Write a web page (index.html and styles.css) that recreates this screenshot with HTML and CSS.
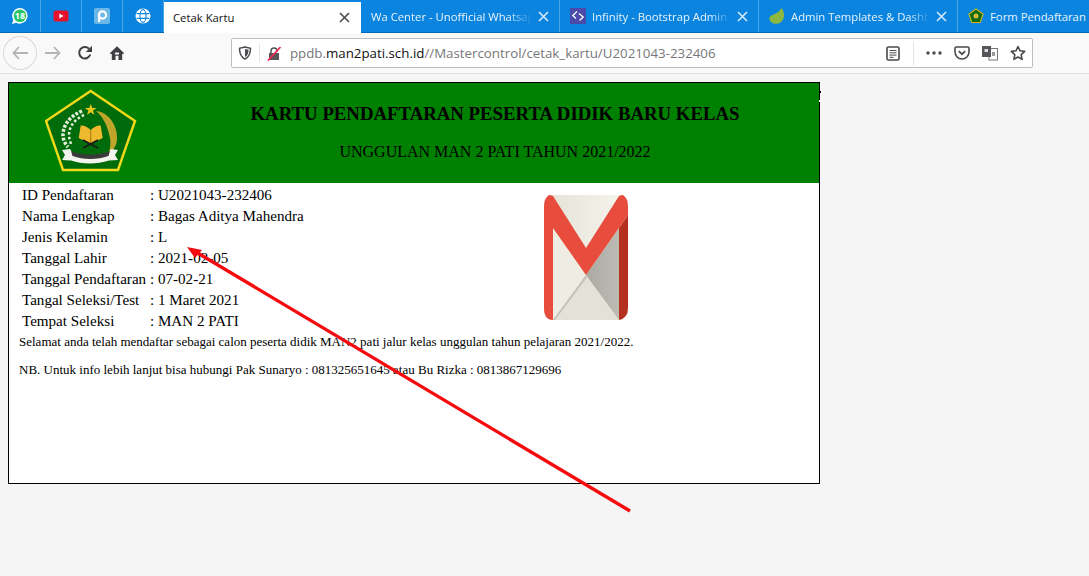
FILE: index.html
```html
<!DOCTYPE html>
<html lang="id">
<head>
    <meta charset="UTF-8">
    <title>Cetak Kartu</title>
    <link rel="stylesheet" href="styles.css">
</head>
<body>
    <!-- tab bar -->
    <div class="tabbar">
        <div class="tab pinned">
            <svg width="18" height="18" viewBox="0 0 18 18"><path d="M9 1a7.800 7.800 0 0 0-6.700 11.800L1 17l4.300-1.200A7.800 7.800 0 1 0 9 1z" fill="#fff"/><circle cx="9" cy="8.800" r="6.300" fill="#25c464"/><text x="9" y="11.800" class="wa-count">18</text></svg>
        </div>
        <div class="tab pinned">
            <svg width="16" height="12" viewBox="0 0 16 12"><rect width="15" height="11" x=".5" y=".5" rx="2.500" fill="#e8112b"/><path d="M6.300 3.400l4.200 2.600-4.200 2.600z" fill="#fff"/></svg>
        </div>
        <div class="tab pinned">
            <svg width="16" height="16" viewBox="0 0 16 16"><rect width="16" height="16" rx="2" fill="#6bb8e8"/><circle cx="8.500" cy="7" r="3.600" fill="none" stroke="#fff" stroke-width="2.200"/><rect x="4" y="5" width="2.200" height="9" fill="#fff"/></svg>
        </div>
        <div class="tab pinned">
            <svg width="16" height="16" viewBox="0 0 16 16" fill="none"><circle cx="8" cy="8" r="7.500" fill="#fff"/><g stroke="#0a84df" stroke-width="1.100"><ellipse cx="8" cy="8" rx="3" ry="6.400"/><path d="M1.600 5.600h12.800M1.600 10.400h12.800"/></g></svg>
        </div>
        <div class="tab active">
            <span class="tab-title">Cetak Kartu</span>
            <svg class="close" width="11" height="11" viewBox="0 0 11 11"><path d="M1 1l9 9M10 1l-9 9" stroke="#4a4a4f" stroke-width="1.600"/></svg>
        </div>
        <div class="tab">
            <span class="tab-title">Wa Center - Unofficial Whatsapp Api</span>
            <svg class="close" width="11" height="11" viewBox="0 0 11 11"><path d="M1 1l9 9M10 1l-9 9" stroke="#d5e9f8" stroke-width="1.600"/></svg>
        </div>
        <div class="tab">
            <svg width="16" height="16" viewBox="0 0 16 16"><rect width="16" height="16" fill="#4a4aa8"/><path d="M7 3.500L2.800 7.500 6 10.500M9 5.500l4.200 3.500L9.500 12.500" fill="none" stroke="#fff" stroke-width="1.300"/></svg>
            <span class="tab-title">Infinity - Bootstrap Admin Template</span>
            <svg class="close" width="11" height="11" viewBox="0 0 11 11"><path d="M1 1l9 9M10 1l-9 9" stroke="#d5e9f8" stroke-width="1.600"/></svg>
        </div>
        <div class="tab">
            <svg width="16" height="16" viewBox="0 0 16 16"><path d="M12.500 0C16 4 16 11 11.500 14.500 7.500 17 1 15.500.3 11 0 6 9 7 12.500 0z" fill="#8cb83f"/></svg>
            <span class="tab-title">Admin Templates &amp; Dashboard</span>
            <svg class="close" width="11" height="11" viewBox="0 0 11 11"><path d="M1 1l9 9M10 1l-9 9" stroke="#d5e9f8" stroke-width="1.600"/></svg>
        </div>
        <div class="tab last">
            <svg width="16" height="16" viewBox="0 0 16 16"><path d="M8 1l7 5-2.700 8.500H3.700L1 6z" fill="#0a6b12" stroke="#c9b420" stroke-width="1.200"/><circle cx="8" cy="8" r="2.500" fill="#d8b93a"/></svg>
            <span class="tab-title">Form Pendaftaran</span>
        </div>
    </div>

    <!-- toolbar -->
    <div class="toolbar">
        <div class="back-btn">
            <svg width="16" height="14" viewBox="0 0 16 14"><path d="M7 1L1.500 7 7 13M2 7h14" fill="none" stroke="#b4b4b6" stroke-width="1.800"/></svg>
        </div>
        <svg class="forward" width="16" height="14" viewBox="0 0 16 14"><path d="M9 1l5.500 6L9 13M14 7H0" fill="none" stroke="#b4b4b6" stroke-width="1.800"/></svg>
        <svg class="reload" width="16" height="16" viewBox="0 0 16 16"><path d="M13.300 9.500A5.700 5.700 0 1 1 12 3.800" fill="none" stroke="#3f3f42" stroke-width="2"/><path d="M15 .8v6.200H8.800z" fill="#3f3f42"/></svg>
        <svg class="home" width="16" height="16" viewBox="0 0 16 16"><path d="M8 1.300L.8 8.200 2 9.300l.8-.7V15h3.700v-4.200h3V15h3.700V8.600l.8.7 1.200-1.100z" fill="#3f3f42"/><rect x="6" y="7.500" width="4" height="2" fill="#f9f9fa"/></svg>

        <div class="urlbar">
            <svg class="shield" width="14" height="14" viewBox="0 0 14 14"><path d="M7 1l5.500 1.300c0 5-1 8.700-5.500 10.700C2.500 11 1.500 7.300 1.500 2.300z" fill="none" stroke="#4a4a4f" stroke-width="1.500"/><path d="M7 3l3.500.8C10.500 7 9.800 9.500 7 11z" fill="#4a4a4f"/></svg>
            <div class="url-sep small"></div>
            <svg class="lock" width="16" height="15" viewBox="0 0 16 15"><path d="M2 7h10v7H2z" fill="#55555a"/><path d="M4 7V5a3 3 0 0 1 6 0v1" fill="none" stroke="#55555a" stroke-width="1.500"/><path d="M1 14.500L13.500 1" stroke="#f02a55" stroke-width="1.800"/></svg>
            <div class="url"><span class="dim">ppdb.</span>man2pati.sch.id<span class="dim">//Mastercontrol/cetak_kartu/U2021043-232406</span></div>
            <svg class="reader" width="14" height="15" viewBox="0 0 14 15"><rect x="1" y="1" width="12" height="13" rx="1.500" fill="none" stroke="#4a4a4f" stroke-width="1.600"/><path d="M3.500 4.500h7M3.500 6.800h7M3.500 9.100h7M3.500 11.300h4" stroke="#4a4a4f"/></svg>
            <div class="url-sep"></div>
            <svg class="dots" width="16" height="4" viewBox="0 0 16 4" fill="#4a4a4f"><circle cx="2" cy="2" r="1.700"/><circle cx="8" cy="2" r="1.700"/><circle cx="14" cy="2" r="1.700"/></svg>
            <svg class="pocket" width="16" height="14" viewBox="0 0 16 14"><path d="M1 2.200C1 1.500 1.500 1 2.200 1h11.600c.7 0 1.200.5 1.200 1.200V6c0 4-3.200 7-7 7s-7-3-7-7z" fill="none" stroke="#4a4a4f" stroke-width="1.600"/><path d="M4.800 5.200L8 8.200l3.200-3" fill="none" stroke="#4a4a4f" stroke-width="1.800"/></svg>
            <svg class="translate" width="16" height="16" viewBox="0 0 16 16"><rect x="7" y="3.500" width="8.500" height="11.500" fill="#fff" stroke="#77777a"/><rect x="0" y="1" width="9" height="11" fill="#55555a"/><rect x="2.500" y="4" width="3.500" height="3" fill="#ddd"/><rect x="10" y="7" width="3" height="4" fill="#99999c"/></svg>
            <svg class="star" width="16" height="16" viewBox="0 0 16 16"><path d="M8 1.500l2 4.300 4.700.6-3.500 3.200.9 4.700L8 12l-4.100 2.300.9-4.700L1.300 6.400 6 5.800z" fill="none" stroke="#4a4a4f" stroke-width="1.600" stroke-linejoin="round"/></svg>
        </div>
    </div>

    <!-- kartu -->
    <div class="page">
        <div class="kartu">
            <div class="kartu-head">
                <svg class="emblem" width="92" height="84" viewBox="0 0 92 84">
                    <path d="M45.700 2L90 32 73 81H18L1 32z" fill="#006b0a" stroke="#f2d91a" stroke-width="2.400"/>
                    <path d="M45.700 15l1.500 4h4.300l-3.500 2.600 1.300 4.200-3.600-2.500-3.600 2.500 1.300-4.200-3.500-2.600h4.300z" fill="#e8c81f"/>
                    <path d="M51 22C62 22 73 36 72 50 72 56 68 62 63 66 66 58 66 52 64 45 62 36 58 28 51 22z" fill="#bfa52a"/>
                    <path d="M37 22C25 27 18 36 18 46 18 50 20 55 23 58" fill="none" stroke="#e6efdd" stroke-width="3.500" stroke-dasharray="2.800 1.600"/>
                    <path d="M39 26C32 29 24 36 24 46 24 49 25 52 26 55" fill="none" stroke="#e6efdd" stroke-width="2.500" stroke-dasharray="2.500 2.200"/>
                    <path d="M45.700 41c-3-3-7-5-10-4.500l-2 12.500 12 6 12-6-2-12.500c-3-.5-7 1.500-10 4.500z" fill="#efb92d"/>
                    <path d="M45.700 41v14" stroke="#8a6a10" stroke-width=".8"/>
                    <path d="M38 51l15 8M53 51l-15 8" stroke="#1a1a1a" stroke-width="1.500"/>
                    <path d="M17 61l8-1 2 3c11 5 26 5 37 0l2-3 7 1-3 5 3 5-9 .5c-12 4-27 4-38 0l-9-.5 3-5z" fill="#f4f4ee"/>
                    <path d="M26 62c12 5 27 5 39 0l-1.500 5c-11 4-25 4-36 0z" fill="#3a3a3a"/>
                </svg>
                <div class="head-text">
                    <h1>KARTU PENDAFTARAN PESERTA DIDIK BARU KELAS</h1>
                    <p>UNGGULAN MAN 2 PATI TAHUN 2021/2022</p>
                </div>
                <span class="tick"></span>
                <span class="tick putih"></span>
            </div>
            <div class="kartu-body">
                <div class="biodata">
                    <span>ID Pendaftaran</span><span>: U2021043-232406</span>
                    <span>Nama Lengkap</span><span>: Bagas Aditya Mahendra</span>
                    <span>Jenis Kelamin</span><span>: L</span>
                    <span>Tanggal Lahir</span><span>: 2021-02-05</span>
                    <span>Tanggal Pendaftaran</span><span>: 07-02-21</span>
                    <span>Tangal Seleksi/Test</span><span>: 1 Maret 2021</span>
                    <span>Tempat Seleksi</span><span>: MAN 2 PATI</span>
                </div>
                <svg class="foto" width="84" height="125" viewBox="0 0 84 125">
                    <defs>
                        <linearGradient id="amplop" x1="0" y1="0" x2="1" y2="0">
                            <stop offset="0" stop-color="#e4e2d6"/>
                            <stop offset="1" stop-color="#f6f5ee"/>
                        </linearGradient>
                        <linearGradient id="sisi" x1="0" y1="0" x2="1" y2="0">
                            <stop offset="0" stop-color="#aaaaa2"/>
                            <stop offset="1" stop-color="#bcbcb4"/>
                        </linearGradient>
                    </defs>
                    <path d="M8 0H76L84 8V115Q84 125 74 125H10Q0 125 0 115V8z" fill="url(#amplop)"/>
                    <path d="M9 33L42 80 9 125z" fill="#efede3"/>
                    <path d="M42 80L9 125H75z" fill="#e4e2d8"/>
                    <path d="M42 80L9 125h2L42.500 83z" fill="#c4c2b8"/>
                    <path d="M42 80L75 33V125z" fill="url(#sisi)"/>
                    <path d="M75 33L84 20V113Q84 123 75 125z" fill="#b5301f"/>
                    <path d="M0 12Q0 3 5 0 7 0 9 1L42 53 75 1Q77 0 79 0 84 3 84 12V20L42 80 9 33V125Q0 125 0 113z" fill="#e74c3c"/>
                </svg>
            </div>
            <p class="note">Selamat anda telah mendaftar sebagai calon peserta didik MAN2 pati jalur kelas unggulan tahun pelajaran 2021/2022.</p>
            <p class="note nb">NB. Untuk info lebih lanjut bisa hubungi Pak Sunaryo : 081325651645 atau Bu Rizka : 0813867129696</p>
        </div>
    </div>

    <!-- panah anotasi -->
    <svg class="arrow" width="460" height="275" viewBox="0 0 460 275">
        <path d="M444 265L10 6" stroke="#f50a0e" stroke-width="3.400" fill="none"/>
        <path d="M1 1l15 3-7 8z" fill="#f50a0e"/>
    </svg>
</body>
</html>
```

FILE: styles.css
```css
* {
    margin: 0;
    padding: 0;
    box-sizing: border-box;
}

body {
    height: 576px;
    overflow: hidden;
    background-color: #f5f5f5;
    font-family: "Liberation Serif", serif;
    color: #000;
    position: relative;
}

/* tabs */
.tabbar {
    display: flex;
    height: 33px;
    background-color: #0a84df;
    border-bottom: 1px solid #0469b4;
    font-family: "Open Sans", sans-serif;
    font-size: 11.3px;
    color: #e8f3fc;
}

.tab {
    display: flex;
    align-items: center;
    gap: 6px;
    width: 199px;
    padding: 0 10px;
    border-right: 1px solid #4aa5e8;
    flex-shrink: 0;
}

.tab.pinned {
    width: 41px;
    padding: 0;
    justify-content: center;
}

.tab.active {
    width: 197px;
    height: 33px;
    padding: 0 11px 0 9px;
    background-color: #fff;
    border-right: none;
    border-top: 2px solid #0a84df;
    color: #111;
}

.tab.last {
    width: 131px;
    padding-right: 0;
    border-right: none;
}

.wa-count {
    font-size: 9px;
    font-weight: 700;
    fill: #fff;
    text-anchor: middle;
}

.tab-title {
    flex: 1;
    min-width: 0;
    overflow: hidden;
    white-space: nowrap;
    -webkit-mask-image: linear-gradient(to right, #000 85%, transparent);
    mask-image: linear-gradient(to right, #000 85%, transparent);
}

.tab.last .tab-title,
.tab.active .tab-title {
    -webkit-mask-image: none;
    mask-image: none;
}

.close {
    flex-shrink: 0;
}

/* toolbar */
.toolbar {
    display: flex;
    align-items: center;
    height: 41px;
    padding: 0 56px 0 3px;
    background-color: #f9f9fa;
    border-bottom: 1px solid #e0e0e2;
}

.back-btn {
    display: flex;
    align-items: center;
    justify-content: center;
    width: 34px;
    height: 34px;
    border: 1px solid #d8d8da;
    border-radius: 50%;
}

.forward {
    margin-left: 8px;
}

.reload {
    margin-left: 16px;
}

.home {
    margin-left: 16px;
}

.urlbar {
    display: flex;
    align-items: center;
    width: 803px;
    height: 30px;
    margin-left: 106px;
    padding: 0 6px;
    background-color: #fff;
    border: 1px solid #bebebe;
    border-radius: 2px;
    font-family: "Open Sans", sans-serif;
    font-size: 13.3px;
    color: #111;
}

.url-sep.small {
    height: 18px;
    margin: 0 0 0 7px;
}

.lock {
    margin-left: 7px;
}

.url {
    flex: 1;
    margin-left: 7px;
    white-space: nowrap;
}

.dim {
    color: #77777a;
}

.url-sep {
    width: 1px;
    height: 24px;
    margin: 0 12px 0 13px;
    background-color: #e4e4e6;
}

.pocket {
    margin-left: 12px;
}

.translate {
    margin-left: 12px;
}

.star {
    margin-left: 12px;
}

/* kartu */
.page {
    padding: 8px;
}

.kartu {
    width: 812px;
    height: 402px;
    background-color: #fff;
    border: 1px solid #000;
}

.kartu-head {
    display: flex;
    height: 100px;
    background-color: #008000;
    position: relative;
}

.emblem {
    margin: 6px 0 0 36px;
    flex-shrink: 0;
}

.head-text {
    flex: 1;
    margin-left: 36px;
    padding-right: 2px;
    text-align: center;
}

.head-text h1 {
    margin-top: 20px;
    font-size: 18.8px;
    line-height: 22px;
}

.head-text p {
    margin-top: 17px;
    font-size: 16px;
    line-height: 20px;
}

.tick {
    position: absolute;
    right: -2px;
    top: 8px;
    width: 2px;
    height: 2px;
    background-color: #000;
}

.tick.putih {
    right: -2px;
    top: 17px;
    width: 2px;
    background-color: #fff;
}

.kartu-body {
    display: flex;
    height: 147px;
    padding: 2px 0 0 13px;
}

.biodata {
    display: grid;
    grid-template-columns: 128px auto;
    grid-auto-rows: 21px;
    align-content: start;
    width: 522px;
    font-size: 15.08px;
    line-height: 21px;
    white-space: nowrap;
}

.foto {
    margin-top: 10px;
}

.note {
    padding-left: 10px;
    font-size: 13px;
    line-height: 16px;
    margin-top: 4px;
}

.note.nb {
    margin-top: 12px;
}

/* anotasi */
.arrow {
    position: absolute;
    left: 186px;
    top: 246px;
}
```
